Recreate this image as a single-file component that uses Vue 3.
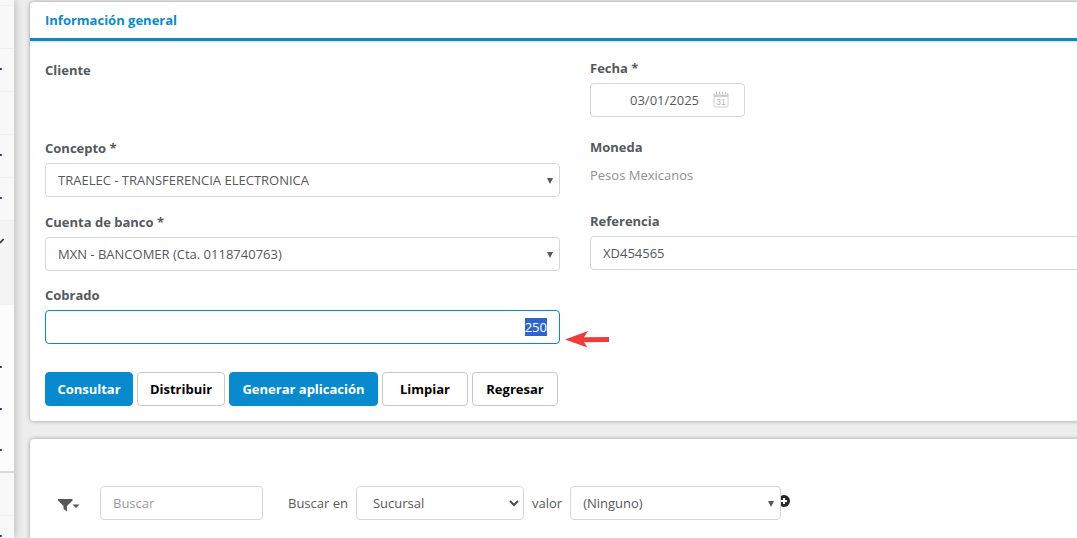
<script setup>
import { ref, onMounted } from 'vue'

const menu = [
  { h: 'stub' },
  { h: 'row' },
  { h: 'row', tip: true },
  { h: 'row' },
  { h: 'row', tip: true },
  { h: 'row', tip: true },
  { h: 'row active', open: true },
  { h: 'row active plain' },
  { h: 'sub' },
  { h: 'sub', tip: true },
  { h: 'sub', tip: true },
  { h: 'sub last', tip: true },
  { h: 'row' },
  { h: 'row', tip: true }
]

const fecha = ref('03/01/2025')
const referencia = ref('XD454565')
const cobrado = ref('250')
const buscar = ref('')
const amount = ref(null)

onMounted(() => {
  amount.value.focus({ preventScroll: true })
  amount.value.select()
})
</script>

<template>
  <div class="page">
    <nav class="sidebar" aria-label="Menú">
      <div v-for="(m, i) in menu" :key="i" :class="['item', ...m.h.split(' ')]">
        <i v-if="m.tip" class="tip"></i>
        <svg v-if="m.open" class="chev" width="4" height="6" viewBox="0 0 4 6"><path d="M0 5L3.6 1" fill="none" stroke="#2b2f3a" stroke-width="1.6" /></svg>
      </div>
    </nav>

    <main class="main">
      <section class="card">
        <h2 class="title">Información general</h2>
        <form class="body" @submit.prevent>
          <div class="cols">
            <div class="col left">
              <div class="field client"><span class="label">Cliente</span></div>
              <div class="field">
                <label class="label" for="concepto">Concepto *</label>
                <div class="pick">
                  <select id="concepto" class="control"><option>TRAELEC - TRANSFERENCIA ELECTRONICA</option></select>
                  <svg class="caret" width="6" height="6" viewBox="0 0 6 6"><path d="M0 0H6L3 6Z" fill="#55595c" /></svg>
                </div>
              </div>
              <div class="field account">
                <label class="label" for="cuenta">Cuenta de banco *</label>
                <div class="pick">
                  <select id="cuenta" class="control"><option>MXN - BANCOMER (Cta. 0118740763)</option></select>
                  <svg class="caret" width="6" height="6" viewBox="0 0 6 6"><path d="M0 0H6L3 6Z" fill="#55595c" /></svg>
                </div>
              </div>
              <div class="field amount">
                <label class="label" for="cobrado">Cobrado</label>
                <input id="cobrado" ref="amount" v-model="cobrado" class="control money" type="text">
                <svg class="pointer" width="46" height="18" viewBox="0 0 46 18"><path d="M1 9.5L24 1L20 7.3L45 7V12L20 12.2L23.5 17.5Z" fill="#f03b3b" /></svg>
              </div>
            </div>

            <div class="col">
              <div class="field date">
                <label class="label" for="fecha">Fecha *</label>
                <div class="pick datebox">
                  <input id="fecha" v-model="fecha" class="control" type="text">
                  <svg class="cal" width="16" height="17" viewBox="0 0 16 17">
                    <path d="M1 6V14.5Q1 16 2.5 16H13.5Q15 16 15 14.5V6" fill="none" stroke="#cdcdcd" />
                    <path d="M.5 2.5H15.5V6H.5Z" fill="#cdcdcd" />
                    <path d="M3.500 0V4M6.500 0V4M9.500 0V4M12.500 0V4" stroke="#fff" stroke-width="2" />
                    <path d="M3.500 .5V3.500M6.500 .5V3.500M9.500 .5V3.500M12.500 .5V3.500" stroke="#c4c4c4" />
                    <text x="8" y="14" text-anchor="middle">31</text>
                  </svg>
                </div>
              </div>
              <div class="field currency">
                <span class="label">Moneda</span>
                <span class="value">Pesos Mexicanos</span>
              </div>
              <div class="field">
                <label class="label" for="referencia">Referencia</label>
                <input id="referencia" v-model="referencia" class="control" type="text">
              </div>
            </div>
          </div>

          <div class="actions">
            <button type="button" class="btn primary w88">Consultar</button>
            <button type="button" class="btn w88">Distribuir</button>
            <button type="button" class="btn primary w149">Generar aplicación</button>
            <button type="button" class="btn w86">Limpiar</button>
            <button type="button" class="btn w86">Regresar</button>
          </div>
        </form>
      </section>

      <section class="card results">
        <div class="search">
          <button type="button" class="filter" aria-label="Filtro">
            <svg width="22" height="13" viewBox="0 0 22 13"><path d="M0 0H14.500V1.500L9 7V12.500L5.500 10V7L0 1.500Z M14.500 5.500H21.500L18 9Z" fill="#55595c" /></svg>
          </button>
          <input v-model="buscar" class="control query" type="text" placeholder="Buscar" aria-label="Buscar">
          <label class="text" for="campo">Buscar en</label>
          <div class="pick fieldpick">
            <select id="campo" class="control"><option>Sucursal</option></select>
            <svg class="arrow" width="10" height="7" viewBox="0 0 10 7"><path d="M1 1L5 5L9 1" fill="none" stroke="#4a4e51" stroke-width="2" /></svg>
          </div>
          <label class="text" for="valor">valor</label>
          <div class="pick valuepick">
            <select id="valor" class="control"><option>(Ninguno)</option></select>
            <svg class="caret" width="6" height="6" viewBox="0 0 6 6"><path d="M0 0H6L3 6Z" fill="#55595c" /></svg>
          </div>
          <button type="button" class="add" aria-label="Agregar">
            <svg width="12" height="12" viewBox="0 0 12 12"><circle cx="6" cy="6" r="6" fill="#26282a" /><path d="M6 3V9M3 6H9" stroke="#fff" stroke-width="2" /></svg>
          </button>
        </div>
      </section>
    </main>
  </div>
</template>

<style>
html, body { background: #ededed; }
</style>

<style scoped>
* { box-sizing: border-box; }
.page {
  display: flex;
  height: 100vh;
  overflow: hidden;
  background: #ededed;
  color: #55595c;
  font: 13px/20px "Trebuchet MS", "Open Sans", sans-serif;
}
.sidebar {
  flex: 0 0 14px;
  background: #f8f8f8;
  box-shadow: 1px 0 8px rgba(0, 0, 0, .22);
}
.item {
  display: flex;
  align-items: center;
  height: 43px;
  padding-bottom: 2px;
  border-bottom: 1px solid #f0f0f0;
}
.item.stub { height: 6px; }
.item.active { background: #f4f4f4; border-color: #f4f4f4; }
.item.plain { height: 41px; }
.item.sub { height: 42px; background: #fcfcfc; border-color: #fcfcfc; }
.item.last { border-bottom: 2px solid #d9d9d9; }
.tip { width: 2px; height: 2px; background: #27405f; border-radius: 0 1px 1px 0; }
.main {
  flex: 1 0 0;
  min-width: 0;
  margin: 2px -43px 0 16px;
}
.card {
  background: #fff;
  border-radius: 4px;
  box-shadow: 0 0 4px rgba(0, 0, 0, .35);
}
.title {
  margin: 0;
  padding: 8px 15px;
  border-bottom: 3px solid #078bce;
  color: #078bce;
  font-size: 13px;
  font-weight: 700;
  line-height: 20px;
  box-shadow: 0 2px 2px -1px rgba(0, 0, 0, .15);
}
.body { padding: 17px 15px 15px; }
.cols { display: grid; grid-template-columns: 1fr 1fr; gap: 30px; }
.col { display: flex; flex-direction: column; gap: 15px; }
.field { display: flex; flex-direction: column; gap: 5px; }
.label { font-weight: 700; }
.client { height: 65px; padding-top: 2px; }
.account { height: 58px; }
.date { margin-bottom: 5px; }
.currency { height: 59px; gap: 8px; }
.value { color: #8f9193; }
.amount { position: relative; }
.pick { position: relative; }
.control {
  display: block;
  width: 100%;
  height: 34px;
  margin: 0;
  padding: 0 12px;
  border: 1px solid #d6d6d6;
  border-radius: 4px;
  background: #fff;
  color: #55595c;
  font: inherit;
  appearance: none;
  outline: none;
}
.control::placeholder { color: #999; opacity: 1; }
.money { border-color: #078bce; text-align: right; }
.money::selection { background: #2e64cf; color: #fff; }
.caret { position: absolute; right: 7px; top: 15px; }
.arrow { position: absolute; right: 5px; top: 14px; }
.pointer { position: absolute; left: 100%; top: 45px; margin-left: 4px; }
.datebox { width: 155px; }
.datebox .control { padding-right: 45px; text-align: right; }
.cal { position: absolute; right: 16px; top: 8px; }
.cal text { font: 9px "Liberation Sans", sans-serif; fill: #b4b4b4; }
.actions { display: flex; gap: 4px; margin-top: 28px; }
.btn {
  height: 34px;
  padding: 0;
  border: 1px solid #c8c8c8;
  border-radius: 4px;
  background: #fff;
  color: #000;
  font: inherit;
  font-weight: 700;
  white-space: nowrap;
}
.primary { border-color: #078bce; background: #078bce; color: #fff; }
.w86 { width: 86px; }
.w88 { width: 88px; }
.w149 { width: 149px; }
.results { height: 200px; margin-top: 18px; padding: 47px 28px; }
.search { display: flex; align-items: center; }
.filter, .add { display: flex; padding: 0; border: 0; background: none; }
.filter { padding-top: 5px; }
.query { width: 163px; margin: 0 25px 0 20px; }
.fieldpick { width: 168px; margin: 0 8px; }
.fieldpick .control { padding-left: 16px; }
.valuepick { width: 211px; margin-left: 8px; z-index: 1; }
.add { margin-left: -3px; padding-bottom: 4px; }
</style>
